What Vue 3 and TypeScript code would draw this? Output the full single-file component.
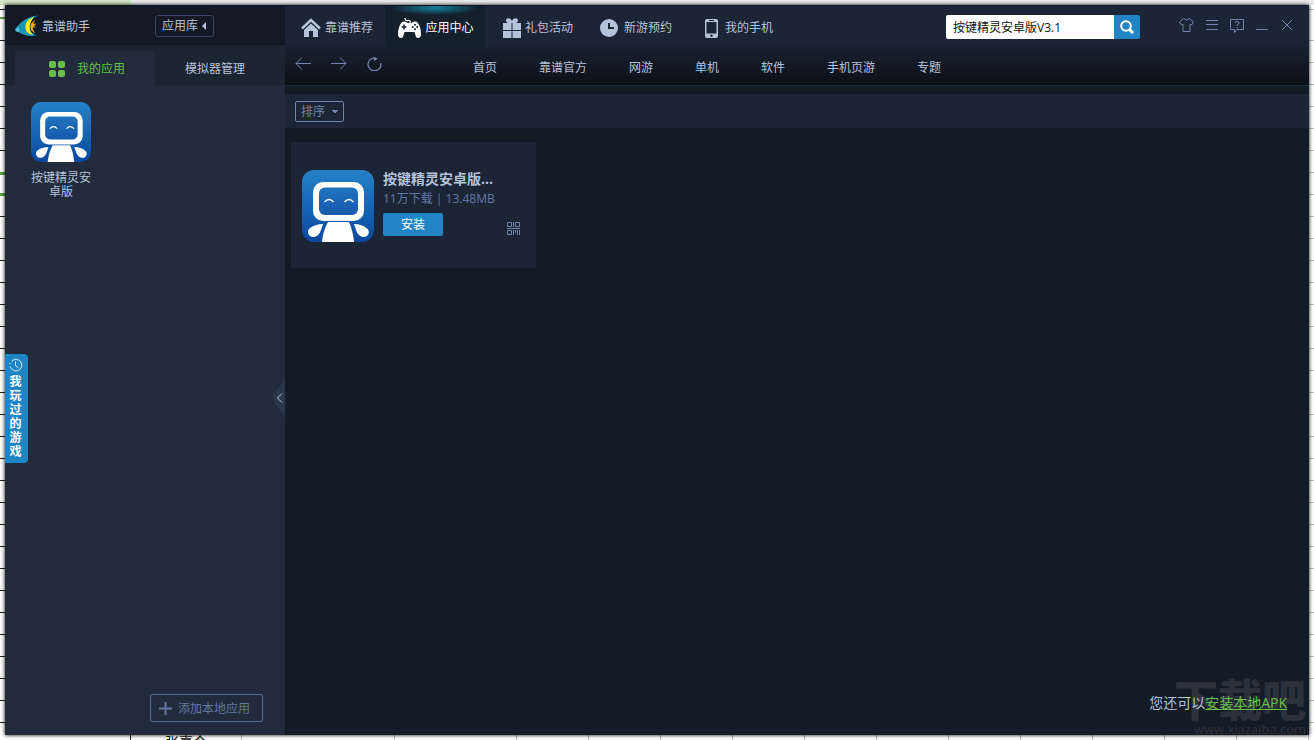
<script setup lang="ts">
import { ref } from 'vue'

interface Tab { icon: string; label: string }
const tabs: Tab[] = [
  { icon: 'home', label: '靠谱推荐' },
  { icon: 'pad', label: '应用中心' },
  { icon: 'gift', label: '礼包活动' },
  { icon: 'clock', label: '新游预约' },
  { icon: 'phone', label: '我的手机' },
]
const current = ref('pad')
const categories: string[] = ['首页', '靠谱官方', '网游', '单机', '软件', '手机页游', '专题']
const query = ref('按键精灵安卓版V3.1')
const sort = ref('排序')
</script>

<template>
  <div class="desktop">
    <div class="sheet" aria-hidden="true">
      <div class="sheet-top"></div>
      <div class="sheet-left"></div>
      <div class="sheet-right"></div>
      <div class="sheet-bottom"><span class="cell">张嘉今</span></div>
    </div>
    <svg class="defs" width="0" height="0" aria-hidden="true">
      <defs>
        <linearGradient id="robotBg" x1="0" y1="0" x2="0" y2="1">
          <stop offset="0" stop-color="#2582c8" />
          <stop offset="1" stop-color="#0b489e" />
        </linearGradient>
        <linearGradient id="robotFace" x1="0" y1="0" x2="0" y2="1">
          <stop offset="0" stop-color="#2173bd" />
          <stop offset="1" stop-color="#1659ab" />
        </linearGradient>
        <symbol id="robot" viewBox="0 0 72 72">
          <rect width="72" height="72" rx="12" fill="url(#robotBg)" />
          <rect x="11" y="12" width="51" height="39" rx="10" fill="#fff" />
          <rect x="17" y="17.500" width="39" height="27.500" rx="6" fill="url(#robotFace)" />
          <path d="M22.500 32q4.500-5 9 0M42.500 32q4.500-5 9 0" fill="none" stroke="#fff" stroke-width="1.300" />
          <path d="M26 52h21q4 9 5 20H20q1-11 6-20z" fill="#fff" />
          <path d="M21 54q-8 0-13.500 4.500C4 62 7 67.500 12 67q5-1 7-7zM52 54q8 0 13 4.500C69 62 66 67.500 61 67q-5-1-7-7z" fill="#fff" />
        </symbol>
      </defs>
    </svg>

    <div class="window">
      <aside class="side">
        <header class="brand">
          <svg class="logo" width="25" height="22" viewBox="0 0 25 22" aria-hidden="true">
            <path d="M24 .5C13 1 6 6 0 14.500l4 3c5 3 10 4 18 3-5-2-8-5-8-9C14 7 18 2 24 .5z" fill="#1796b4" />
            <path d="M3 12L0 15l2 2 3-1z" fill="#5ac1df" />
            <path d="M19 2c-6 2-8.500 5-8.500 10 0 4 2.500 7 7.500 8-5-5-4-12 1-18z" fill="#fff21a" />
            <path d="M20.500 5c-3 1.500-4.500 3-5 5.500-.5 3 0 5.500 5 8-2-2.500-3-4.500-2.500-6.500l3 1-2-2 2.500-2.500-3 .5c.2-1.500.8-2.800 2-4z" fill="#f3a51b" />
          </svg>
          <h1>靠谱助手</h1>
          <button class="library" type="button">应用库
            <svg width="5" height="8" viewBox="0 0 5 8" aria-hidden="true"><path d="M4 0v8L0 4z" fill="#b4c2da" /></svg>
          </button>
        </header>
        <div class="side-tabs">
          <button class="side-tab active" type="button">
            <svg width="16" height="16" viewBox="0 0 16 16" fill="#6abf4b" aria-hidden="true">
              <rect width="7" height="7" rx="2" /><rect x="9" width="7" height="7" rx="2" />
              <rect y="9" width="7" height="7" rx="2" /><rect x="9" y="9" width="7" height="7" rx="2" />
            </svg>
            <span>我的应用</span>
          </button>
          <button class="side-tab" type="button">模拟器管理</button>
        </div>
        <div class="apps">
          <button class="app" type="button">
            <svg width="60" height="60" aria-hidden="true"><use href="#robot" /></svg>
            <span>按键精灵安卓版</span>
          </button>
        </div>
        <footer class="side-foot">
          <button class="add" type="button">
            <svg width="13" height="13" viewBox="0 0 13 13" aria-hidden="true"><path d="M6.500 0v13M0 6.500h13" stroke="#6176a0" stroke-width="2" /></svg>
            <span>添加本地应用</span>
          </button>
        </footer>
        <button class="played" type="button">
          <svg width="14" height="14" viewBox="0 0 14 14" fill="none" stroke="#d8edf9" aria-hidden="true">
            <path d="M2.500 3.500A5.800 5.800 0 1 1 1.300 8.500" /><path d="M6.500 3.500v4l3 2.500" />
            <path d="M.5 5.500h1.200" />
          </svg>
          <span>我玩过的游戏</span>
        </button>
        <button class="fold" type="button" aria-label="收起">
          <svg width="12" height="44" viewBox="0 0 12 44" aria-hidden="true">
            <path d="M12 0C11 10 0 14 0 22s11 12 12 22z" fill="#2a374a" />
            <path d="M9 17.500l-4.500 4.500L9 26.500" fill="none" stroke="#c3cee0" />
          </svg>
        </button>
      </aside>

      <main class="main">
        <header class="top">
          <nav class="tabs">
            <button v-for="t in tabs" :key="t.icon" type="button" class="tab" :class="{ active: current === t.icon }" @click="current = t.icon">
              <svg v-if="t.icon === 'home'" width="20" height="20" viewBox="0 0 20 20" aria-hidden="true">
                <path d="M1 10.500L10 2l9 8.500" fill="none" stroke="currentColor" stroke-width="2.500" />
                <path d="M3 12L10 5.500l7 6.500v7h-5v-6H8v6H3z" fill="currentColor" />
              </svg>
              <svg v-else-if="t.icon === 'pad'" width="23" height="20" viewBox="0 0 23 20" aria-hidden="true">
                <path d="M7 0q0 3 3 2.500T12 5" fill="none" stroke="currentColor" stroke-width="1.200" />
                <path d="M6 3.500q2-.3 3.500 1.500h4Q15 3.200 17 3.500c4 0 6 8 6 12.500 0 3.500-2.500 5-5 3l-1.500-5h-10L5 19c-2.500 2-5 .5-5-3C0 11.500 2 3.500 6 3.500z" fill="currentColor" />
                <path d="M6 6.500v5M3.500 9h5" stroke="#15202d" stroke-width="1.500" />
                <circle cx="17" cy="6.800" r="1" fill="#15202d" /><circle cx="17" cy="11.200" r="1" fill="#15202d" />
                <circle cx="14.800" cy="9" r="1" fill="#15202d" /><circle cx="19.200" cy="9" r="1" fill="#15202d" />
              </svg>
              <svg v-else-if="t.icon === 'gift'" width="18" height="20" viewBox="0 0 18 20" fill="currentColor" aria-hidden="true">
                <path d="M9 5Q3 6 3 2.500C3 0 7-1 9 3c2-4 6-3 6-.5C15 6 9 5 9 5z" />
                <path d="M0 5h8.500v7H0zM9.500 5H18v7H9.500zM0 13h8.500v7H0zM9.500 13H18v7H9.500z" />
              </svg>
              <svg v-else-if="t.icon === 'clock'" width="18" height="18" viewBox="0 0 18 18" aria-hidden="true">
                <circle cx="9" cy="9" r="9" fill="currentColor" /><path d="M9 4v5h5" fill="none" stroke="#1c2535" stroke-width="2" />
              </svg>
              <svg v-else width="13" height="19" viewBox="0 0 13 19" aria-hidden="true">
                <rect width="13" height="19" rx="2" fill="currentColor" /><path d="M1.500 3h10v11.500h-10z" fill="#1c2535" />
                <path d="M4 1.500h5" stroke="#1c2535" /><circle cx="6.500" cy="16.700" r="1.200" fill="#1c2535" />
              </svg>
              <span>{{ t.label }}</span>
            </button>
          </nav>
          <form class="search" role="search" @submit.prevent>
            <input v-model="query" type="text" aria-label="搜索应用" />
            <button type="submit" aria-label="搜索">
              <svg width="14" height="14" viewBox="0 0 14 14" fill="none" stroke="#fff" aria-hidden="true"><circle cx="6" cy="6" r="4.800" stroke-width="2" /><path d="M9.500 9.500l3.500 3.500" stroke-width="3" /></svg>
            </button>
          </form>
          <div class="controls">
            <button type="button" aria-label="皮肤"><svg width="15" height="14" viewBox="0 0 15 14"><path d="M4.500.5q3 3 6 0l4 3.500-2 3-1.500-.8v7.300H4V6.200L2.500 7l-2-3z" /></svg></button>
            <button type="button" aria-label="菜单"><svg width="12" height="14" viewBox="0 0 12 14"><path d="M0 2.500h12M0 6.500h12M0 11.500h12" /></svg></button>
            <button type="button" aria-label="反馈"><svg width="14" height="15" viewBox="0 0 14 15"><path d="M.5 1.500h13v10H7l-2.500 3v-3h-4z" /><path d="M5 5q0-1.500 2-1.500T9 5q0 1-2 2v1M7 9v1.200" /></svg></button>
            <button type="button" aria-label="最小化"><svg width="14" height="14" viewBox="0 0 14 14"><path d="M0 11.500h12" /></svg></button>
            <button type="button" aria-label="关闭"><svg width="10" height="14" viewBox="0 0 10 14"><path d="M0 2l10 10M10 2L0 12" /></svg></button>
          </div>
        </header>

        <div class="sub">
          <div class="history">
            <button type="button" aria-label="后退"><svg width="16" height="14" viewBox="0 0 16 14"><path d="M16 6.500H1M7 .5l-6 6 6 6" /></svg></button>
            <button type="button" aria-label="前进"><svg width="16" height="14" viewBox="0 0 16 14"><path d="M0 6.500h15M9 .5l6 6-6 6" /></svg></button>
            <button type="button" aria-label="刷新"><svg width="16" height="14" viewBox="0 0 16 14"><path d="M13.800 6A6.500 6.300 0 1 1 8.500 1.200" stroke-width="1.300" /><path d="M6 0l5 1.500L7.500 4z" fill="#6f83ad" stroke="none" /></svg></button>
          </div>
          <nav class="cats">
            <a v-for="c in categories" :key="c" href="#">{{ c }}</a>
          </nav>
        </div>

        <div class="filter">
          <select v-model="sort" aria-label="排序"><option>排序</option></select>
        </div>

        <section class="content">
          <article class="card">
            <svg class="card-icon" width="72" height="72" aria-hidden="true"><use href="#robot" /></svg>
            <div class="info">
              <h2>按键精灵安卓版...</h2>
              <p>11万下载 | 13.48MB</p>
              <button class="install" type="button">安装</button>
            </div>
            <button class="qr" type="button" aria-label="二维码">
              <svg width="13" height="13" viewBox="0 0 13 13" fill="none" stroke="#6f83ad" aria-hidden="true">
                <path d="M.5.5h4v4h-4zM8.500.5h4v4h-4zM.5 8.500h4v4h-4zM6.500 0v5M0 6.500h13M6.500 8v5M8.500 8v3M10.500 8v5M12.500 8v5" />
              </svg>
            </button>
          </article>
          <div class="watermark" aria-hidden="true"><strong>下载吧</strong><span>www.xiazaiba.com</span></div>
          <p class="local">您还可以<a href="#">安装本地APK</a></p>
        </section>
      </main>
    </div>
  </div>
</template>

<style>
html, body { margin: 0; }
</style>

<style scoped>
* { box-sizing: border-box; }
.desktop {
  position: relative;
  min-height: 100vh;
  padding: 5px;
  display: flex;
  overflow: hidden;
  background: #fff;
  color: #b4c2da;
  font: 12px/18px "Open Sans", "Noto Sans CJK SC", sans-serif;
}
.defs { position: absolute; }
button, input, select { font: inherit; color: inherit; }
button { display: flex; align-items: center; padding: 0; border: 0; background: none; cursor: pointer; }
h1, h2, p { margin: 0; font-size: 12px; font-weight: 400; }
svg { flex: none; display: block; }
a { color: inherit; text-decoration: none; }

.sheet-top, .sheet-left, .sheet-right, .sheet-bottom { position: absolute; }
.sheet-top { inset: 0 0 auto 0; height: 5px; background: linear-gradient(90deg, #d3e5c5 131px, #ebebeb 131px); }
.sheet-left {
  inset: 5px auto 0 0; width: 5px;
  background:
    linear-gradient(#5c9c3c, #5c9c3c) 0 12px / 5px 2px no-repeat,
    linear-gradient(#5c9c3c, #5c9c3c) 0 167px / 5px 3px no-repeat,
    linear-gradient(#5c9c3c, #5c9c3c) 0 188px / 5px 3px no-repeat,
    repeating-linear-gradient(#fff 0 21px, #222 21px 22px) 0 14px;
}
.sheet-right { inset: 5px 0 0 auto; width: 5px; background: repeating-linear-gradient(#fff 0 21px, #bbb 21px 22px) 0 14px; }
.sheet-bottom {
  inset: auto 0 0 0; height: 5px; overflow: hidden; color: #111;
  background:
    linear-gradient(#222, #222) 130px 0 / 1px 5px no-repeat,
    linear-gradient(#bbb, #bbb) 241px 0 / 1px 5px no-repeat,
    linear-gradient(#bbb, #bbb) 394px 0 / 1px 5px no-repeat,
    repeating-linear-gradient(90deg, #fff 0 71px, #bbb 71px 72px) 445px 0 no-repeat #fff;
}
.cell { display: block; padding-left: 165px; font-size: 14px; line-height: 14px; }

.window {
  position: relative; flex: 1; min-width: 0; display: grid; grid-template-columns: 280px 1fr;
  background: #131b26; box-shadow: 0 0 4px #000;
}
.side { position: relative; display: flex; flex-direction: column; background: #212b3b; }
.brand { height: 40px; display: flex; align-items: center; padding: 2px 0 0 10px; background: #131a26; }
.brand h1 { margin-left: 2px; padding-top: 2px; width: 113px; }
.library { width: 59px; height: 22px; padding: 0 6px; justify-content: space-between; border: 1px solid #39465f; border-radius: 3px; }
.side-tabs { height: 40px; display: flex; padding: 6px 0 0 10px; background: #1b2431; }
.side-tab { width: 140px; padding-top: 2px; justify-content: center; border-radius: 3px 3px 0 0; }
.side-tab:last-child { width: 120px; }
.side-tab.active { gap: 12px; padding-left: 4px; background: #212b3b; color: #6abf4b; }
.apps { flex: 1; padding: 17px 26px; }
.app { width: 60px; flex-direction: column; gap: 9px; line-height: 14px; overflow-wrap: anywhere; }
.app span { width: 62px; text-align: center; }
.side-foot { display: flex; justify-content: flex-end; padding: 0 22px 13px; }
.add { width: 113px; height: 28px; gap: 6px; padding: 1px 0 0 8px; border: 1px solid #5a6e99; border-radius: 2px; color: #6176a0; }
.played {
  position: absolute; left: 0; top: 349px; width: 23px; height: 109px; padding: 4px 2px 4px 0;
  flex-direction: column; gap: 3px; background: #2185c5; color: #fff; border-radius: 0 4px 4px 0;
}
.played span { width: 12px; line-height: 14px; font-weight: 700; }
.fold { position: absolute; right: 0; top: 371px; }

.main { display: flex; flex-direction: column; min-width: 0; }
.top { height: 42px; display: flex; background: #1c2535; border-top: 1px solid #111722; }
.tabs { display: flex; }
.tab { width: 100px; justify-content: center; gap: 4px; padding-top: 3px; }
.tab:first-child { padding-left: 4px; }
.tab:nth-child(2) { padding-left: 2px; }
.tab:nth-child(3) { padding-left: 6px; }
.tab:nth-child(4) { gap: 6px; padding-left: 2px; }
.tab:last-child { gap: 7px; padding-left: 8px; }
.tab.active {
  color: #fff;
  background: radial-gradient(ellipse 44px 7px at 50% 2px, #11829d, transparent), #15202d;
}
.search { display: flex; width: 194px; height: 24px; margin: 9px 0 0 auto; }
.search input { flex: 1; min-width: 0; padding: 2px 7px 0; border: 0; border-radius: 2px 0 0 2px; background: #fff; color: #111; outline: 0; }
.search button { width: 26px; justify-content: center; background: #2185c5; border-radius: 0 2px 2px 0; }
.controls { display: flex; align-items: flex-start; gap: 12px; margin: 12px 17px 0 39px; }
.controls svg, .history svg { fill: none; stroke: #6f83ad; }

.sub { height: 39px; display: flex; background: linear-gradient(#17212f, #0c1118); border-bottom: 1px solid #16303b; }
.history { width: 188px; display: flex; gap: 20px; padding: 0 0 4px 10px; }
.cats { display: flex; align-items: center; gap: 42px; padding-top: 3px; white-space: nowrap; }
.filter { margin-top: 8px; height: 34px; display: flex; align-items: center; padding-left: 10px; background: #1c2535; }
.filter select {
  width: 49px; height: 21px; padding: 1px 5px 0; appearance: none; border: 1px solid #6f83ad; border-radius: 2px; color: #6f83ad;
  background: linear-gradient(to bottom left, #6f83ad 50%, transparent 50%) 35px 8px / 4px 4px no-repeat,
    linear-gradient(to bottom right, #6f83ad 50%, transparent 50%) 39px 8px / 4px 4px no-repeat, #1c2535;
}
.content { position: relative; flex: 1; padding: 14px 6px; background: #131b26; }
.card { position: relative; width: 245px; height: 126px; display: flex; padding: 27px 11px; gap: 9px; background: #1c2535; }
.card-icon { margin-top: 1px; }
.info h2 { font-size: 14px; font-weight: 700; line-height: 20px; white-space: nowrap; }
.info p { margin-top: 1px; color: #6276a4; white-space: nowrap; }
.install { width: 60px; height: 23px; margin-top: 5px; justify-content: center; background: #2185c5; color: #fff; border-radius: 2px; }
.qr { position: absolute; right: 16px; bottom: 33px; }
.local { position: absolute; right: 22px; bottom: 22px; font-size: 14px; line-height: 20px; }
.local a { color: #6abf4b; text-decoration: underline; }
.watermark { position: absolute; right: 3px; bottom: 0; text-align: right; color: #2b323c; }
.watermark strong { display: block; font-size: 44px; line-height: 46px; font-weight: 900; }
.watermark span { display: block; font-size: 13px; line-height: 12px; }
</style>
